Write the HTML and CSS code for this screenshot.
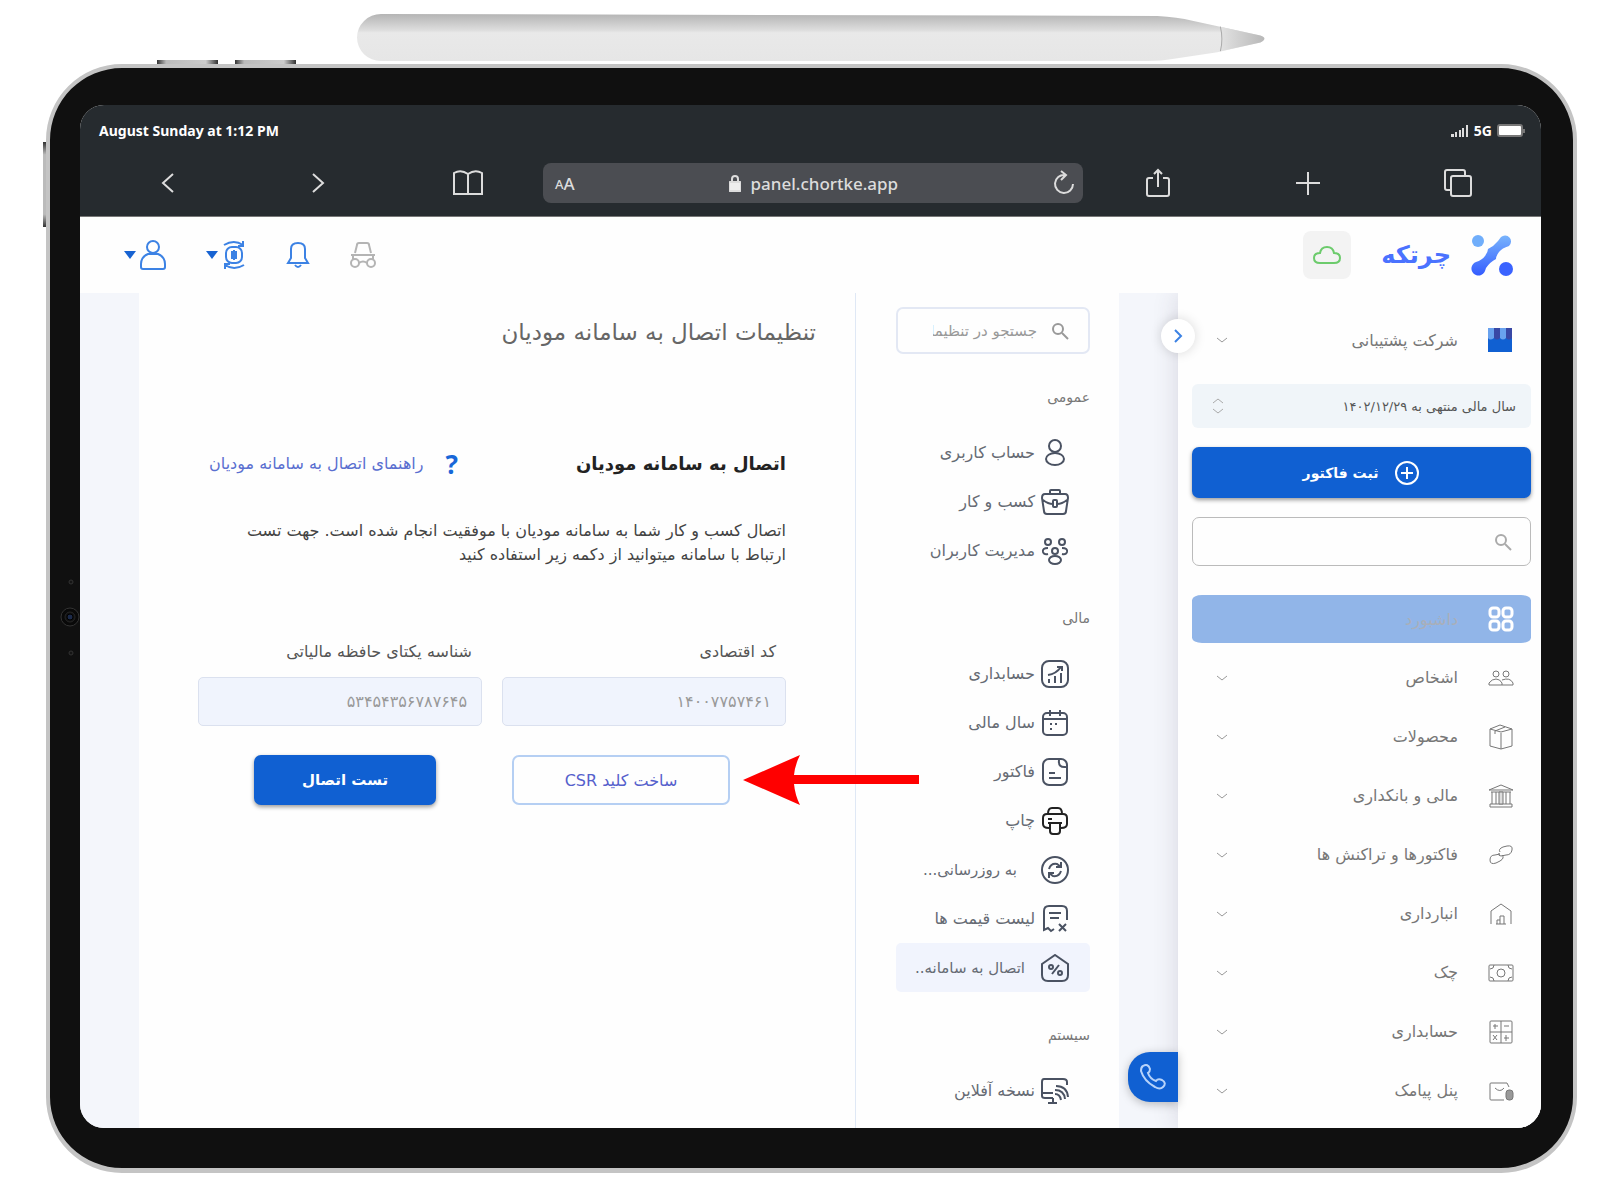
FILE: index.html
```html
<!DOCTYPE html>
<html lang="fa">
<head>
    <meta charset="UTF-8">
    <meta name="viewport" content="width=device-width, initial-scale=1.0">
    <title>تنظیمات اتصال به سامانه مودیان</title>
    <link rel="stylesheet" href="styles.css">
</head>
<body>
    <svg class="sprite" aria-hidden="true">
        <symbol id="chevron" viewBox="0 0 14 14"><path d="M2 5l5 4 5-4"/></symbol>
        <symbol id="search" viewBox="0 0 18 18"><circle cx="7" cy="7" r="5"/><path d="M11 11l6 6"/></symbol>
    </svg>

    <!-- pencil -->
    <svg class="pencil" viewBox="0 0 909 49" preserveAspectRatio="none">
        <defs>
            <linearGradient id="pencilFill" x1="0" y1="0" x2="0" y2="1">
                <stop offset="0" stop-color="#b4b4b4"/>
                <stop offset=".35" stop-color="#dedede"/>
                <stop offset=".4" stop-color="#e9e9e9"/>
                <stop offset="1" stop-color="#e6e6e6"/>
            </linearGradient>
            <linearGradient id="pencilTip" x1="0" y1="0" x2="1" y2="0">
                <stop offset="0" stop-color="#e2e2e2"/>
                <stop offset="1" stop-color="#b8b8b8"/>
            </linearGradient>
        </defs>
        <path d="M24 0L800 2Q820 3 835 7L903 22Q911 25 903 29L860 39 815 46Q805 48 790 48H24A24 24 0 0 1 24 0z" fill="url(#pencilFill)"/>
        <path d="M863 13l40 9q8 3 0 7l-40 9q3-12 0-25z" fill="url(#pencilTip)"/>
        <path d="M863 13q3 13 0 25" fill="none" stroke="#aaa" stroke-width="1"/>
    </svg>

    <div class="device">
        <span class="key key-one"></span>
        <span class="key key-two"></span>
        <span class="key key-side"></span>
        <svg class="camera" viewBox="0 0 20 84">
            <circle cx="11" cy="7" r="2" fill="#151515" stroke="#333"/>
            <circle cx="10" cy="42" r="9" fill="#090909" stroke="#333"/>
            <circle cx="10" cy="42" r="5" fill="#111" stroke="#262626"/>
            <circle cx="10" cy="42" r="3" fill="#1c2a4a"/>
            <circle cx="11" cy="78" r="2" fill="#151515" stroke="#333"/>
        </svg>

        <div class="screen">
            <div class="browser">
                <div class="status">
                    <span>August Sunday at 1:12 PM</span>
                    <span class="status-right">
                        <svg class="signal" width="18" height="12" viewBox="0 0 18 12"><path d="M0 9h3v3H0zM4 7h2v5H4zM8 5h2v7H8zM11 3h2v9h-2zM15 0h2v12h-2z"/></svg>
                        5G
                        <svg width="28" height="14" viewBox="0 0 28 14"><rect x="1" y="1" width="24" height="11" rx="2" fill="#fff" stroke="#777"/><path d="M27 5v4" stroke="#777"/></svg>
                    </span>
                </div>
                <div class="toolbar">
                    <button type="button" aria-label="Back"><svg width="30" height="30" viewBox="0 0 30 30"><path d="M20 6L10 15l10 9"/></svg></button>
                    <button type="button" aria-label="Forward"><svg width="30" height="30" viewBox="0 0 30 30"><path d="M10 6l10 9-10 9"/></svg></button>
                    <button type="button" aria-label="Bookmarks"><svg width="32" height="30" viewBox="0 0 32 30"><path d="M16 6Q9 1 2 5v21h28V5q-7-4-14 1v20"/></svg></button>
                    <div class="address">
                        <span class="small-a">A</span><span>A</span>
                        <span class="url">
                            <svg width="12" height="18" viewBox="0 0 12 18"><rect x="0" y="8" width="12" height="9" rx="1" fill="#eee"/><path d="M3 8V5a3 3 0 0 1 6 0v3"/></svg>
                            panel.chortke.app
                        </span>
                        <button type="button" aria-label="Reload"><svg width="22" height="28" viewBox="0 0 22 28"><path d="M12 6a9 9 0 1 0 8 9M8 2l5 4-5 5"/></svg></button>
                    </div>
                    <button type="button" aria-label="Share"><svg width="28" height="32" viewBox="0 0 28 32"><path d="M9 11H5q-2 0-2 2v14q0 2 2 2h18q2 0 2-2V13q0-2-2-2h-4M14 20V4M10 7l4-4 4 4"/></svg></button>
                    <button type="button" aria-label="New tab"><svg width="30" height="30" viewBox="0 0 30 30"><path d="M15 4v23M3 15h24"/></svg></button>
                    <button type="button" aria-label="Tabs"><svg width="30" height="30" viewBox="0 0 30 30"><rect x="8" y="8" width="20" height="20" rx="2"/><path d="M8 22H4q-2 0-2-2V4q0-2 2-2h16q2 0 2 2v4"/></svg></button>
                </div>
            </div>

            <div class="app" dir="rtl">
                <header class="app-header">
                    <svg class="logo" width="42" height="44" viewBox="0 0 42 44">
                        <defs><linearGradient id="logoFill" x1="0" y1="0" x2="0" y2="1"><stop offset="0" stop-color="#79b4fc"/><stop offset="1" stop-color="#345cff"/></linearGradient></defs>
                        <circle cx="7" cy="8" r="6" fill="#70aefb"/>
                        <circle cx="35" cy="36" r="7" fill="#3a63ff"/>
                        <path d="M30 4a6 6 0 1 1 8 9q-7 2-10 6t-3 7q-6 3-10 9l-1 3a7 7 0 1 1-9-9q6-2 9-6t3-7q6-3 10-8z" fill="url(#logoFill)"/>
                    </svg>
                    <span class="brand">چرتکه</span>
                    <button type="button" class="cloud" aria-label="وضعیت اتصال"><svg width="28" height="20" viewBox="0 0 28 20"><path d="M7 18q-6 0-6-5t6-5q1-6 7-6t7 6q6 0 6 5t-6 5z"/></svg></button>
                    <div class="tools">
                        <button type="button" aria-label="حالت ناشناس" class="muted"><svg width="26" height="28" viewBox="0 0 26 28"><path d="M5 12l2-8q0-2 2-2h8q2 0 2 2l2 8M1 14h24M3 14v5M23 14v5M9 22q4-3 8 0"/><circle cx="5" cy="22" r="4"/><circle cx="21" cy="22" r="4"/></svg></button>
                        <button type="button" aria-label="اعلان ها"><svg width="24" height="28" viewBox="0 0 24 28"><path d="M2 22l3-5V8q0-6 7-6t7 6v9l3 5zM9 24q3 4 6 0"/></svg></button>
                        <button type="button" aria-label="ارز"><svg width="24" height="30" viewBox="0 0 24 30"><rect x="4" y="7" width="16" height="16" rx="6"/><path d="M12 10v10M10 11v8M14 11v8M2 5q10-6 19 0M21 1v5h-5M22 25q-10 6-19 0M3 29v-5h5"/></svg><i class="caret"></i></button>
                        <button type="button" aria-label="حساب من"><svg width="26" height="32" viewBox="0 0 26 32"><circle cx="13" cy="8" r="6"/><path d="M8 15h10q7 3 7 10v3q0 2-2 2H3q-2 0-2-2v-3q0-7 7-10z"/></svg><i class="caret"></i></button>
                    </div>
                </header>

                <div class="app-body">
                    <aside class="sidebar">
                        <div class="company">
                            <svg class="shop" width="24" height="24" viewBox="0 0 24 24"><path d="M0 0h24v24H0z" fill="#1060d2"/><path d="M0 0h6v10q-4 3-6 0zM12 0h6v10q-3 3-6 0z" fill="#69a2ee"/><path d="M6 0h6v10q-3 3-6 0zM18 0h6v10q-3 3-6 0z" fill="#3948a5"/></svg>
                            <span>شرکت پشتیبانی</span>
                            <svg class="chevron" width="14" height="14"><use href="#chevron"/></svg>
                        </div>
                        <button type="button" class="year">
                            <span>سال مالی منتهی به ۱۴۰۲/۱۲/۲۹</span>
                            <svg width="12" height="18" viewBox="0 0 12 18"><path d="M1 6l5-4 5 4M1 12l5 4 5-4"/></svg>
                        </button>
                        <button type="button" class="btn-primary new-invoice">
                            <svg width="26" height="26" viewBox="0 0 26 26"><circle cx="13" cy="13" r="11"/><path d="M13 7v12M7 13h12"/></svg>
                            ثبت فاکتور
                        </button>
                        <label class="side-search">
                            <svg width="18" height="18"><use href="#search"/></svg>
                            <input type="text" aria-label="جستجو در منو">
                        </label>
                        <nav class="side-nav">
                            <a href="#" class="active">
                                <svg width="26" height="26" viewBox="0 0 26 26"><rect x="2" y="2" width="9" height="9" rx="3"/><rect x="15" y="2" width="9" height="9" rx="3"/><rect x="2" y="15" width="9" height="9" rx="3"/><rect x="15" y="15" width="9" height="9" rx="3"/></svg>
                                <span>داشبورد</span>
                            </a>
                            <a href="#">
                                <svg width="26" height="26" viewBox="0 0 26 26"><circle cx="8" cy="9" r="3"/><circle cx="18" cy="9" r="3"/><path d="M1 20v-2q3-4 7-4t6 4v2zM14 15q8-3 11 3v2H14"/></svg>
                                <span>اشخاص</span><svg class="chevron" width="14" height="14"><use href="#chevron"/></svg>
                            </a>
                            <a href="#">
                                <svg width="26" height="26" viewBox="0 0 26 26"><path d="M2 5l11 3 11-3v17l-11 3-11-3zM13 9v16M2 5l10-4 12 4M7 10V7l10-4"/></svg>
                                <span>محصولات</span><svg class="chevron" width="14" height="14"><use href="#chevron"/></svg>
                            </a>
                            <a href="#">
                                <svg width="26" height="26" viewBox="0 0 26 26"><path d="M1 7l12-5 12 5zM3 9h20M2 21h22v3H2zM4 9v12M8 9v12M18 9v12M22 9v12"/><path d="M11 9h4v12h-4z" fill="#ddd"/></svg>
                                <span>مالی و بانکداری</span><svg class="chevron" width="14" height="14"><use href="#chevron"/></svg>
                            </a>
                            <a href="#">
                                <svg width="26" height="26" viewBox="0 0 26 26"><path d="M12 10q-2-3 3-5l4-1q6-1 5 4t-6 5l-5 1q-3 0-2-3M14 13q3 3-2 6l-4 2q-6 2-6-3t5-5l5-1"/></svg>
                                <span>فاکتورها و تراکنش ها</span><svg class="chevron" width="14" height="14"><use href="#chevron"/></svg>
                            </a>
                            <a href="#">
                                <svg width="26" height="26" viewBox="0 0 26 26"><path d="M3 23V10l10-7 10 7v13M9 23v-4h3v4M12 19v-4h4v8M8 23h10"/></svg>
                                <span>انبارداری</span><svg class="chevron" width="14" height="14"><use href="#chevron"/></svg>
                            </a>
                            <a href="#">
                                <svg width="26" height="26" viewBox="0 0 26 26"><rect x="1" y="5" width="24" height="16" rx="1"/><circle cx="13" cy="13" r="4"/><path d="M2 9q4 0 4-4M24 9q-4 0-4-4M2 17q4 0 4 4M24 17q-4 0-4 4"/></svg>
                                <span>چک</span><svg class="chevron" width="14" height="14"><use href="#chevron"/></svg>
                            </a>
                            <a href="#">
                                <svg width="26" height="26" viewBox="0 0 26 26"><rect x="2" y="2" width="22" height="22" rx="1"/><path d="M13 2v22M2 13h22M5 7h5M7 5v5M16 7h5M5 16l4 5M9 16l-4 5M16 19h5M18 16v6"/></svg>
                                <span>حسابداری</span><svg class="chevron" width="14" height="14"><use href="#chevron"/></svg>
                            </a>
                            <a href="#">
                                <svg width="26" height="26" viewBox="0 0 26 26"><path d="M16 22H3q-1 0-1-1V6q0-1 1-1h16l2 4M7 10q5 5 9 0"/><rect x="18" y="12" width="7" height="10" rx="3" fill="#999"/></svg>
                                <span>پنل پیامک</span><svg class="chevron" width="14" height="14"><use href="#chevron"/></svg>
                            </a>
                        </nav>
                        <button type="button" class="collapse" aria-label="بستن منو"><svg width="14" height="16" viewBox="0 0 14 16"><path d="M4 2l6 6-6 6"/></svg></button>
                        <button type="button" class="phone" aria-label="تماس"><svg width="26" height="26" viewBox="0 0 26 26"><path d="M3 2q5-3 7 3 0 3-2 4 2 6 8 8 2-3 6-1 5 3 1 7-3 3-8 0Q4 17 1 7q0-4 2-5z"/></svg></button>
                    </aside>

                    <section class="settings">
                        <label class="settings-search">
                            <svg width="18" height="18"><use href="#search"/></svg>
                            <input type="text" placeholder="جستجو در تنظیمات" aria-label="جستجو در تنظیمات">
                        </label>
                        <h3>عمومی</h3>
                        <a href="#"><svg width="28" height="28" viewBox="0 0 28 28"><circle cx="14" cy="7" r="6"/><ellipse cx="14" cy="20" rx="9" ry="6"/></svg><span>حساب کاربری</span></a>
                        <a href="#"><svg width="28" height="28" viewBox="0 0 28 28"><path d="M9 6V3q0-1 1-1h8q1 0 1 1v3M4 6h20q3 0 3 4l-2 13q0 3-3 3H6q-3 0-3-3L1 10q0-4 3-4zM2 12q5 4 10 4M26 12q-5 4-10 4"/><rect x="12" y="12" width="4" height="7" rx="1"/></svg><span>کسب و کار</span></a>
                        <a href="#"><svg width="28" height="28" viewBox="0 0 28 28"><circle cx="7" cy="5" r="3"/><circle cx="21" cy="5" r="3"/><circle cx="14" cy="14" r="3"/><ellipse cx="14" cy="23" rx="6" ry="4"/><path d="M7 11q-6 0-5 4 1 3 5 2M21 11q6 0 5 4-1 3-5 2"/></svg><span>مدیریت کاربران</span></a>
                        <h3>مالی</h3>
                        <a href="#"><svg width="28" height="28" viewBox="0 0 28 28"><rect x="1" y="1" width="26" height="26" rx="7"/><path d="M8 19v4M14 16v7M20 13v10M7 15q8-1 13-8M16 7h5v4"/></svg><span>حسابداری</span></a>
                        <a href="#"><svg width="28" height="28" viewBox="0 0 28 28"><rect x="2" y="4" width="24" height="22" rx="4"/><path d="M3 10h22M9 1v6M19 1v6M9 15h2M14 15h2M9 20h2"/></svg><span>سال مالی</span></a>
                        <a href="#"><svg width="28" height="28" viewBox="0 0 28 28"><rect x="2" y="1" width="24" height="26" rx="6"/><path d="M18 2q-1 8 7 7M8 15h6M8 20h12"/></svg><span>فاکتور</span></a>
                        <a href="#" class="dark"><svg width="28" height="28" viewBox="0 0 28 28"><path d="M7 7q0-6 4-6h6q4 0 4 6M8 21q-6 0-6-4v-6q0-4 4-4h16q4 0 4 4v6q0 4-6 4M7 16h14M9 16v8q0 3 3 3h4q3 0 3-3v-8M7 12h4"/></svg><span>چاپ</span></a>
                        <a href="#" class="clipped"><svg width="28" height="28" viewBox="0 0 28 28"><circle cx="14" cy="14" r="13"/><path d="M8 13q2-6 8-5l4 3M20 6v5h-5M20 15q-2 6-8 5l-4-3M8 22v-5h5"/></svg><span>به روزرسانی...</span></a>
                        <a href="#"><svg width="28" height="28" viewBox="0 0 28 28"><path d="M26 15V6q0-5-5-5H8Q3 1 3 6v19l4-2 3 3 3-2M8 8h12M9 13h9M18 19l7 7M25 19l-7 7"/></svg><span>لیست قیمت ها</span></a>
                        <a href="#" class="clipped active"><svg width="28" height="28" viewBox="0 0 28 28"><path d="M1 10l13-9 13 9v11q0 6-6 6H7q-6 0-6-6zM18 11l-7 9"/><circle cx="10" cy="13" r="2"/><circle cx="19" cy="19" r="2"/></svg><span>اتصال به سامانه..</span></a>
                        <h3>سیستم</h3>
                        <a href="#"><svg width="28" height="28" viewBox="0 0 28 28"><path d="M26 8V5q0-3-4-3H3Q1 2 1 5v14q0 2 3 2h8M1 16h11M12 21v5M7 26h9M14 17q5 0 6 6M14 13q9 0 10 9M15 9q11 0 12 11"/></svg><span>نسخه آفلاین</span></a>
                    </section>

                    <main class="content">
                        <h1>تنظیمات اتصال به سامانه مودیان</h1>
                        <div class="panel">
                            <div class="panel-head">
                                <h2>اتصال به سامانه مودیان</h2>
                                <a href="#"><b>?</b>راهنمای اتصال به سامانه مودیان</a>
                            </div>
                            <p>اتصال کسب و کار شما به سامانه مودیان با موفقیت انجام شده است. جهت تست<br>ارتباط با سامانه میتوانید از دکمه زیر استفاده کنید</p>
                            <form class="fields">
                                <div>
                                    <label for="code">کد اقتصادی</label>
                                    <input type="text" id="code" value="۱۴۰۰۷۷۵۷۴۶۱" disabled>
                                </div>
                                <div>
                                    <label for="memory">شناسه یکتای حافظه مالیاتی</label>
                                    <input type="text" id="memory" value="۵۳۴۵۴۳۵۶۷۸۷۶۴۵" disabled>
                                </div>
                                <div class="action">
                                    <button type="button" class="btn-outline">ساخت کلید CSR</button>
                                    <svg class="arrow" width="176" height="50" viewBox="0 0 176 50"><path d="M0 25L57 0Q52 10 51 20H176V29H51Q52 40 57 50z" fill="#f00"/></svg>
                                </div>
                                <div class="action">
                                    <button type="button" class="btn-primary">تست اتصال</button>
                                </div>
                            </form>
                        </div>
                    </main>
                </div>
            </div>
        </div>
    </div>
</body>
</html>
```
FILE: styles.css
```css
*{
    box-sizing: border-box;
}
body{
    margin: 0;
    padding: 14px 43px 12px 46px;
    background: #fff;
    font-family: "DejaVu Sans", sans-serif;
    font-size: 16px;
}
h1, h2, h3, p{
    margin: 0;
}
a{
    color: inherit;
    text-decoration: none;
}
button, input{
    font: inherit;
    color: inherit;
    border: none;
    background: none;
    padding: 0;
}
button{
    display: flex;
    align-items: center;
    justify-content: center;
    cursor: pointer;
}
svg{
    display: block;
    flex-shrink: 0;
    fill: none;
    stroke: currentColor;
    stroke-width: 2;
}
.sprite{
    position: absolute;
    width: 0;
    height: 0;
}
.pencil{
    width: 59.4%;
    height: 48px;
    margin: 0 auto 2px;
    stroke: none;
}

/* tablet frame */
.device{
    position: relative;
    padding: 37px 32px 40px 30px;
    background: #101010;
    border: 4px solid #c4c4c4;
    border-bottom-width: 5px;
    border-radius: 76px;
}
.key{
    position: absolute;
    top: -8px;
    width: 61px;
    height: 4px;
    background: linear-gradient(to right, #333, #bbb 15%, #ccc 80%, #333);
}
.key-one{
    left: 107px;
}
.key-two{
    left: 185px;
}
.key-side{
    top: 74px;
    left: -7px;
    width: 3px;
    height: 85px;
    background: linear-gradient(#333, #bbb 15%, #bbb 85%, #333);
}
.camera{
    position: absolute;
    left: 10px;
    top: 507px;
    width: 20px;
    height: 84px;
    stroke-width: 1;
}
.screen{
    overflow: hidden;
    border-radius: 24px;
    background: #fefefe;
}

/* browser bars */
.browser{
    background: #262b2f;
    color: #dcdcdc;
    border-bottom: 1px solid #777;
    font-family: "Noto Sans", sans-serif;
}
.status{
    display: flex;
    justify-content: space-between;
    padding: 16px 16px 0 19px;
    font-size: 14px;
    line-height: 20px;
    font-weight: bold;
    color: #fff;
}
.status-right{
    display: flex;
    align-items: center;
    gap: 5px;
}
.signal{
    fill: #ddd;
    stroke: none;
}
.toolbar{
    display: grid;
    grid-template-columns: repeat(3, 5fr) 18fr repeat(3, 5fr);
    align-items: center;
    padding: 22px 8px 13px 13px;
}
.address{
    display: flex;
    align-items: center;
    height: 40px;
    padding: 0 8px 0 12px;
    border-radius: 8px;
    background: #4b4d52;
    font-size: 17px;
    font-weight: 500;
}
.small-a{
    font-size: 13px;
    padding-top: 2px;
}
.url{
    display: flex;
    align-items: center;
    gap: 9px;
    margin: 0 auto;
}

/* app header */
.app{
    color: #777;
}
.app-header{
    display: flex;
    align-items: center;
    height: 76px;
    padding: 0 28px 0 44px;
}
.logo{
    stroke: none;
}
.brand{
    margin: 0 20px 0 30px;
    color: #4a72ff;
    font-size: 24px;
    font-weight: bold;
}
.cloud{
    width: 48px;
    height: 48px;
    border-radius: 8px;
    background: #f3f3f3;
    color: #6ccb6c;
}
.tools{
    display: flex;
    align-items: center;
    gap: 40px;
    margin-right: auto;
    color: #3c82e4;
}
.tools button{
    gap: 4px;
}
.tools .muted{
    color: #b4b4b4;
}
.caret{
    border: 6px solid transparent;
    border-top: 8px solid #1763d2;
    border-bottom: none;
}
.app-body{
    display: flex;
    padding-left: 59px;
    background: #f4f6fb;
}

/* main menu */
.sidebar{
    position: relative;
    width: 363px;
    padding: 27px 10px 8px 14px;
    background: #fefefe;
    box-shadow: 0 0 24px rgba(60, 50, 80, .16);
    clip-path: inset(0 0 0 -60px);
}
.chevron{
    margin-right: auto;
    stroke: #999;
    stroke-width: 1;
}
.company{
    display: flex;
    align-items: center;
    gap: 30px;
    height: 40px;
    padding: 0 19px 0 23px;
}
.shop{
    stroke: none;
}
.year{
    justify-content: space-between;
    width: 100%;
    height: 44px;
    margin-top: 24px;
    padding: 0 15px 0 20px;
    border-radius: 6px;
    background: #f0f5f9;
    color: #555;
    font-size: 13px;
}
.year svg{
    stroke: #aaa;
    stroke-width: 1;
}
.btn-primary{
    border-radius: 7px;
    background: #1060d2;
    color: #fff;
    font-size: 14px;
    font-weight: bold;
    box-shadow: 0 2px 4px rgba(0, 0, 0, .4);
}
.new-invoice{
    width: 100%;
    height: 51px;
    margin-top: 19px;
    gap: 16px;
}
.side-search{
    display: flex;
    align-items: center;
    height: 49px;
    margin-top: 19px;
    padding: 0 18px;
    border: 1px solid #bbb;
    border-radius: 7px;
    color: #aaa;
}
.side-search input{
    flex: 1;
    min-width: 0;
}
.side-nav{
    margin-top: 24px;
}
.side-nav a{
    display: flex;
    align-items: center;
    gap: 30px;
    height: 59px;
    padding: 0 17px 0 23px;
}
.side-nav svg{
    stroke-width: 1;
}
.side-nav .active{
    height: 58px;
    background: #91b5e8;
    background-clip: padding-box;
    border: solid transparent;
    border-width: 5px 0;
    border-radius: 10px;
    color: #a9afb9;
}
.side-nav .active svg{
    stroke: #fff;
    stroke-width: 3;
}
.collapse{
    position: absolute;
    left: -17px;
    top: 26px;
    width: 34px;
    height: 34px;
    border-radius: 50%;
    background: #fff;
    color: #3c82e4;
    box-shadow: 0 0 12px rgba(0, 0, 0, .15);
}
.phone{
    position: absolute;
    left: -50px;
    bottom: 26px;
    width: 50px;
    height: 50px;
    border-radius: 22px 0 0 22px;
    background: #1060d2;
    color: #b7d3fa;
    box-shadow: 0 2px 10px rgba(0, 0, 0, .25);
}

/* settings menu */
.settings{
    width: 264px;
    margin-right: 59px;
    padding: 14px 29px 7px 40px;
    background: #fefefe;
    border-left: 1px solid #dfe8f5;
}
.settings-search{
    display: flex;
    align-items: center;
    gap: 14px;
    height: 47px;
    padding: 0 19px 0 35px;
    border: 2px solid #e3e8f4;
    border-radius: 7px;
    color: #999;
    font-size: 15px;
}
.settings-search input{
    flex: 1;
    min-width: 0;
}
.settings-search input::placeholder{
    color: #999;
    opacity: 1;
}
.settings h3{
    margin: 33px 0 21px;
    line-height: 20px;
    font-size: 14px;
    font-weight: normal;
}
.settings a{
    display: flex;
    align-items: center;
    gap: 6px;
    height: 49px;
    padding-right: 21px;
    border-radius: 5px;
    color: #666b74;
}
.settings a svg{
    color: #4a5262;
}
.settings .dark svg{
    color: #222;
}
.settings .clipped span{
    width: 130px;
    font-size: 15px;
    text-align: center;
}
.settings .active{
    background: #f1f4fd;
}

/* page */
.content{
    flex: 1;
    padding: 22px 39px 0 59px;
    background: #fefefe;
}
.content h1{
    line-height: 34px;
    font-size: 23px;
    font-weight: normal;
    color: #666;
}
.panel{
    padding: 97px 30px 0 0;
}
.panel-head{
    display: flex;
    align-items: center;
    justify-content: space-between;
    line-height: 36px;
}
.panel-head h2{
    font-size: 18px;
    color: #222;
}
.panel-head a{
    display: flex;
    align-items: center;
    gap: 22px;
    margin-left: 11px;
    color: #5a6fd0;
}
.panel-head b{
    font-size: 26px;
    font-family: "Noto Sans", sans-serif;
    color: #1867d8;
}
.panel p{
    margin-top: 37px;
    line-height: 24px;
    color: #444;
    white-space: nowrap;
}
.fields{
    display: grid;
    grid-template-columns: 1fr 1fr;
    gap: 29px 20px;
    margin-top: 71px;
}
.fields label{
    display: block;
    padding-right: 10px;
    line-height: 28px;
    color: #555;
}
.fields input{
    display: block;
    width: 100%;
    height: 49px;
    margin-top: 11px;
    padding: 0 14px;
    border: 1px solid #dbe1ef;
    border-radius: 5px;
    background: #f0f4fd;
    color: #999;
}
.action{
    position: relative;
    display: flex;
    justify-content: center;
}
.action button{
    height: 50px;
    min-width: 182px;
}
.action .btn-primary{
    margin-left: 10px;
    font-size: 15px;
}
.action .btn-outline{
    min-width: 218px;
    margin-right: 46px;
    border: 2px solid #b5cff3;
    border-radius: 7px;
    color: #5560cc;
}
.arrow{
    position: absolute;
    right: -133px;
    top: 0;
    stroke: none;
}
```
